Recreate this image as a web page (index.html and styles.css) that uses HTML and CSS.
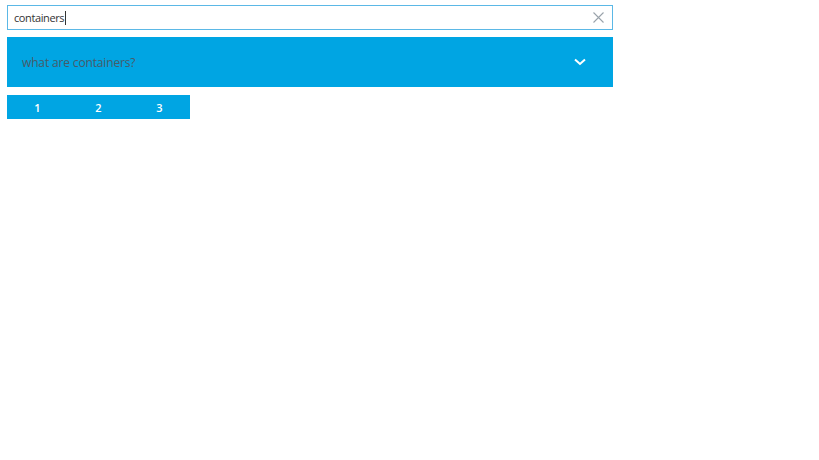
FILE: index.html
```html
<!DOCTYPE html>
<html lang="en">
<head>
    <meta charset="UTF-8">
    <title>FAQ search</title>
    <link rel="stylesheet" href="styles.css">
</head>
<body>
    <div class="page">
        <div class="search">
            <span class="search-text">containers<span class="caret"></span></span>
            <svg class="clear" width="11" height="11" viewBox="0 0 11 11">
                <path d="M0.5 0.5 L10.5 10.5 M10.5 0.5 L0.5 10.5" stroke="#9aa3ab" stroke-width="1.1" fill="none"/>
            </svg>
        </div>

        <div class="question">
            <span class="question-text">what are containers?</span>
            <svg class="chevron" width="12" height="8" viewBox="0 0 12 8">
                <path d="M1 1.5 L6 6 L11 1.5" stroke="#ffffff" stroke-width="2" fill="none"/>
            </svg>
        </div>

        <div class="pager">
            <span class="page-btn">1</span>
            <span class="page-btn">2</span>
            <span class="page-btn">3</span>
        </div>
    </div>
</body>
</html>
```

FILE: styles.css
```css
* {
    margin: 0;
    padding: 0;
    box-sizing: border-box;
    font-family: 'Open Sans', 'Noto Sans', sans-serif;
}
body {
    background: #ffffff;
}
.page {
    width: 606px;
    margin: 5px 0 0 7px;
    display: flex;
    flex-direction: column;
}
.search {
    height: 25px;
    border: 1px solid #5bb8e6;
    display: flex;
    align-items: center;
    justify-content: space-between;
    padding: 0 8px 0 6px;
}
.search-text {
    font-size: 11px;
    color: #333333;
    display: flex;
    align-items: center;
    letter-spacing: -0.4px;
}
.caret {
    width: 1px;
    height: 14px;
    background: #333333;
    margin-left: 1px;
}
.question {
    margin-top: 7px;
    height: 50px;
    background: #00a5e3;
    display: flex;
    align-items: center;
    justify-content: space-between;
    padding: 0 27px 0 15px;
}
.question-text {
    font-size: 12px;
    color: #485a68;
    letter-spacing: -0.15px;
}
.pager {
    margin-top: 8px;
    width: 183px;
    height: 24px;
    background: #00a5e3;
    display: flex;
}
.page-btn {
    flex: 1;
    display: flex;
    align-items: center;
    justify-content: center;
    color: #ffffff;
    font-size: 11px;
    font-weight: 600;
}
```
